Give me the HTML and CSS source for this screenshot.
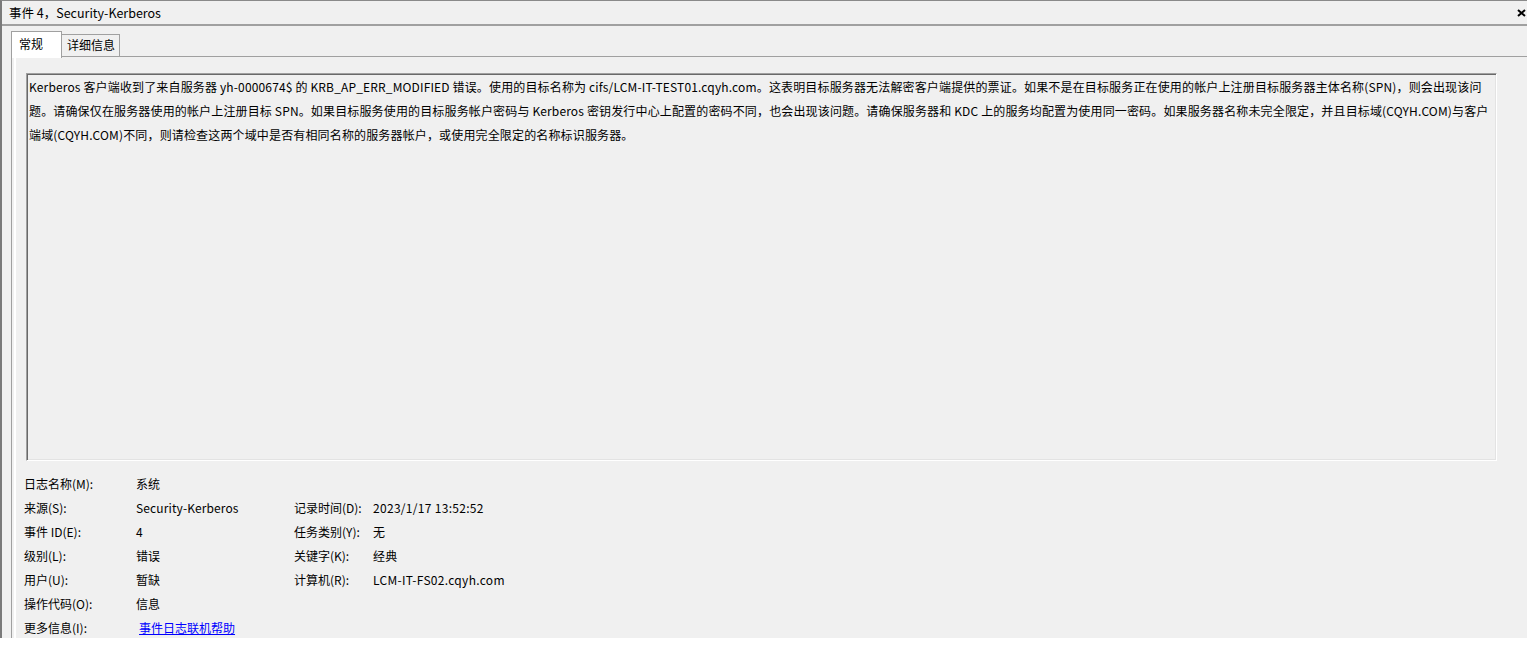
FILE: index.html
```html
<!DOCTYPE html>
<html lang="zh-CN">
<head>
<meta charset="utf-8">
<title>事件 4，Security-Kerberos</title>
<link rel="stylesheet" href="styles.css">
</head>
<body>
<div class="window">
  <div class="titlebar">
    <span class="title">事件 4，Security-Kerberos</span>
    <span class="close" aria-label="关闭">
      <svg width="9" height="8" viewBox="0 0 9 8"><path d="M1 1 L8 7 M8 1 L1 7" stroke="#000" stroke-width="2" fill="none"/></svg>
    </span>
  </div>
  <div class="tabs">
    <div class="tab active">常规</div>
    <div class="tab">详细信息</div>
  </div>
  <div class="panel">
    <div class="panel-inner">
      <div class="desc">
        <div class="line">Kerberos 客户端收到了来自服务器 yh-0000674$ 的 KRB_AP_ERR_MODIFIED 错误。使用的目标名称为 cifs/LCM-IT-TEST01.cqyh.com。这表明目标服务器无法解密客户端提供的票证。如果不是在目标服务正在使用的帐户上注册目标服务器主体名称(SPN)，则会出现该问</div>
        <div class="line">题。请确保仅在服务器使用的帐户上注册目标 SPN。如果目标服务使用的目标服务帐户密码与 Kerberos 密钥发行中心上配置的密码不同，也会出现该问题。请确保服务器和 KDC 上的服务均配置为使用同一密码。如果服务器名称未完全限定，并且目标域(CQYH.COM)与客户</div>
        <div class="line">端域(CQYH.COM)不同，则请检查这两个域中是否有相同名称的服务器帐户，或使用完全限定的名称标识服务器。</div>
      </div>
      <div class="fields">
        <div class="row"><span class="lab">日志名称(M):</span><span class="val">系统</span></div>
        <div class="row"><span class="lab">来源(S):</span><span class="val">Security-Kerberos</span><span class="lab2">记录时间(D):</span><span class="val2">2023/1/17 13:52:52</span></div>
        <div class="row"><span class="lab">事件 ID(E):</span><span class="val">4</span><span class="lab2">任务类别(Y):</span><span class="val2">无</span></div>
        <div class="row"><span class="lab">级别(L):</span><span class="val">错误</span><span class="lab2">关键字(K):</span><span class="val2">经典</span></div>
        <div class="row"><span class="lab">用户(U):</span><span class="val">暂缺</span><span class="lab2">计算机(R):</span><span class="val2">LCM-IT-FS02.cqyh.com</span></div>
        <div class="row"><span class="lab">操作代码(O):</span><span class="val">信息</span></div>
        <div class="row"><span class="lab">更多信息(I):</span><a class="link" href="#">事件日志联机帮助</a></div>
      </div>
    </div>
  </div>
</div>
</body>
</html>
```

FILE: styles.css
```css
html, body {
  margin: 0;
  padding: 0;
  background: #ffffff;
}
body {
  font-family: "Noto Sans CJK SC", "Microsoft YaHei", sans-serif;
  font-size: 12px;
  color: #000;
}
.window {
  height: 638px;
  background: #f0f0f0;
  border-left: 2px solid #7a7a7a;
  border-top: 1px solid #8a8a8a;
  box-sizing: border-box;
  overflow: hidden;
  display: flex;
  flex-direction: column;
}
.titlebar {
  flex: none;
  height: 23px;
  border-bottom: 2px solid #a0a0a0;
  display: flex;
  align-items: center;
  justify-content: space-between;
  padding-left: 7px;
  padding-right: 1px;
  line-height: 23px;
}
.title {
  font-size: 12.5px;
}
.close {
  display: flex;
  align-items: center;
}
.tabs {
  flex: none;
  display: flex;
  align-items: flex-end;
  height: 31px;
  padding-left: 9px;
  position: relative;
  z-index: 1;
  margin-bottom: -1px;
}
.tab {
  box-sizing: border-box;
  border: 1px solid #a0a0a0;
  border-bottom: none;
  padding: 0 4px 0 5px;
  height: 22px;
  line-height: 20px;
  font-size: 12px;
  background: #f0f0f0;
}
.tab.active {
  width: 51px;
  height: 27px;
  background: #ffffff;
  padding-left: 7px;
  line-height: 23px;
  margin-bottom: -1px;
}
.tab:not(.active) {
  margin-bottom: 1px;
  border-left: none;
}
.panel {
  flex: 1;
  min-height: 0;
  margin-left: 9px;
  border-top: 1px solid #a0a0a0;
  border-left: 1px solid #a0a0a0;
}
.panel-inner {
  margin-left: 2px;
  border-left: 2px solid #ffffff;
  height: 100%;
  padding-top: 16px;
  padding-left: 8px;
  box-sizing: border-box;
}
.desc {
  margin-left: 2px;
  width: 1471px;
  height: 388px;
  box-sizing: border-box;
  border-top: 1px solid #a0a0a0;
  border-left: 1px solid #a0a0a0;
  border-right: 1px solid #ffffff;
  border-bottom: 1px solid #ffffff;
  box-shadow: inset 1px 1px 0 #696969, inset -1px -1px 0 #e3e3e3;
  padding: 1px 0 0 2px;
  line-height: 24px;
  letter-spacing: 0.15px;
  overflow: hidden;
}
.line {
  white-space: nowrap;
}
.fields {
  margin-top: 11px;
  line-height: 24px;
}
.row {
  display: flex;
  height: 24px;
}
.lab {
  width: 112px;
  flex: none;
}
.val {
  width: 158px;
  flex: none;
  letter-spacing: 0.12px;
}
.lab2 {
  width: 79px;
  flex: none;
}
.val2 {
  flex: none;
  letter-spacing: 0.3px;
}
.link {
  color: #0000ff;
  text-decoration: underline;
  margin-left: 3px;
}
```
